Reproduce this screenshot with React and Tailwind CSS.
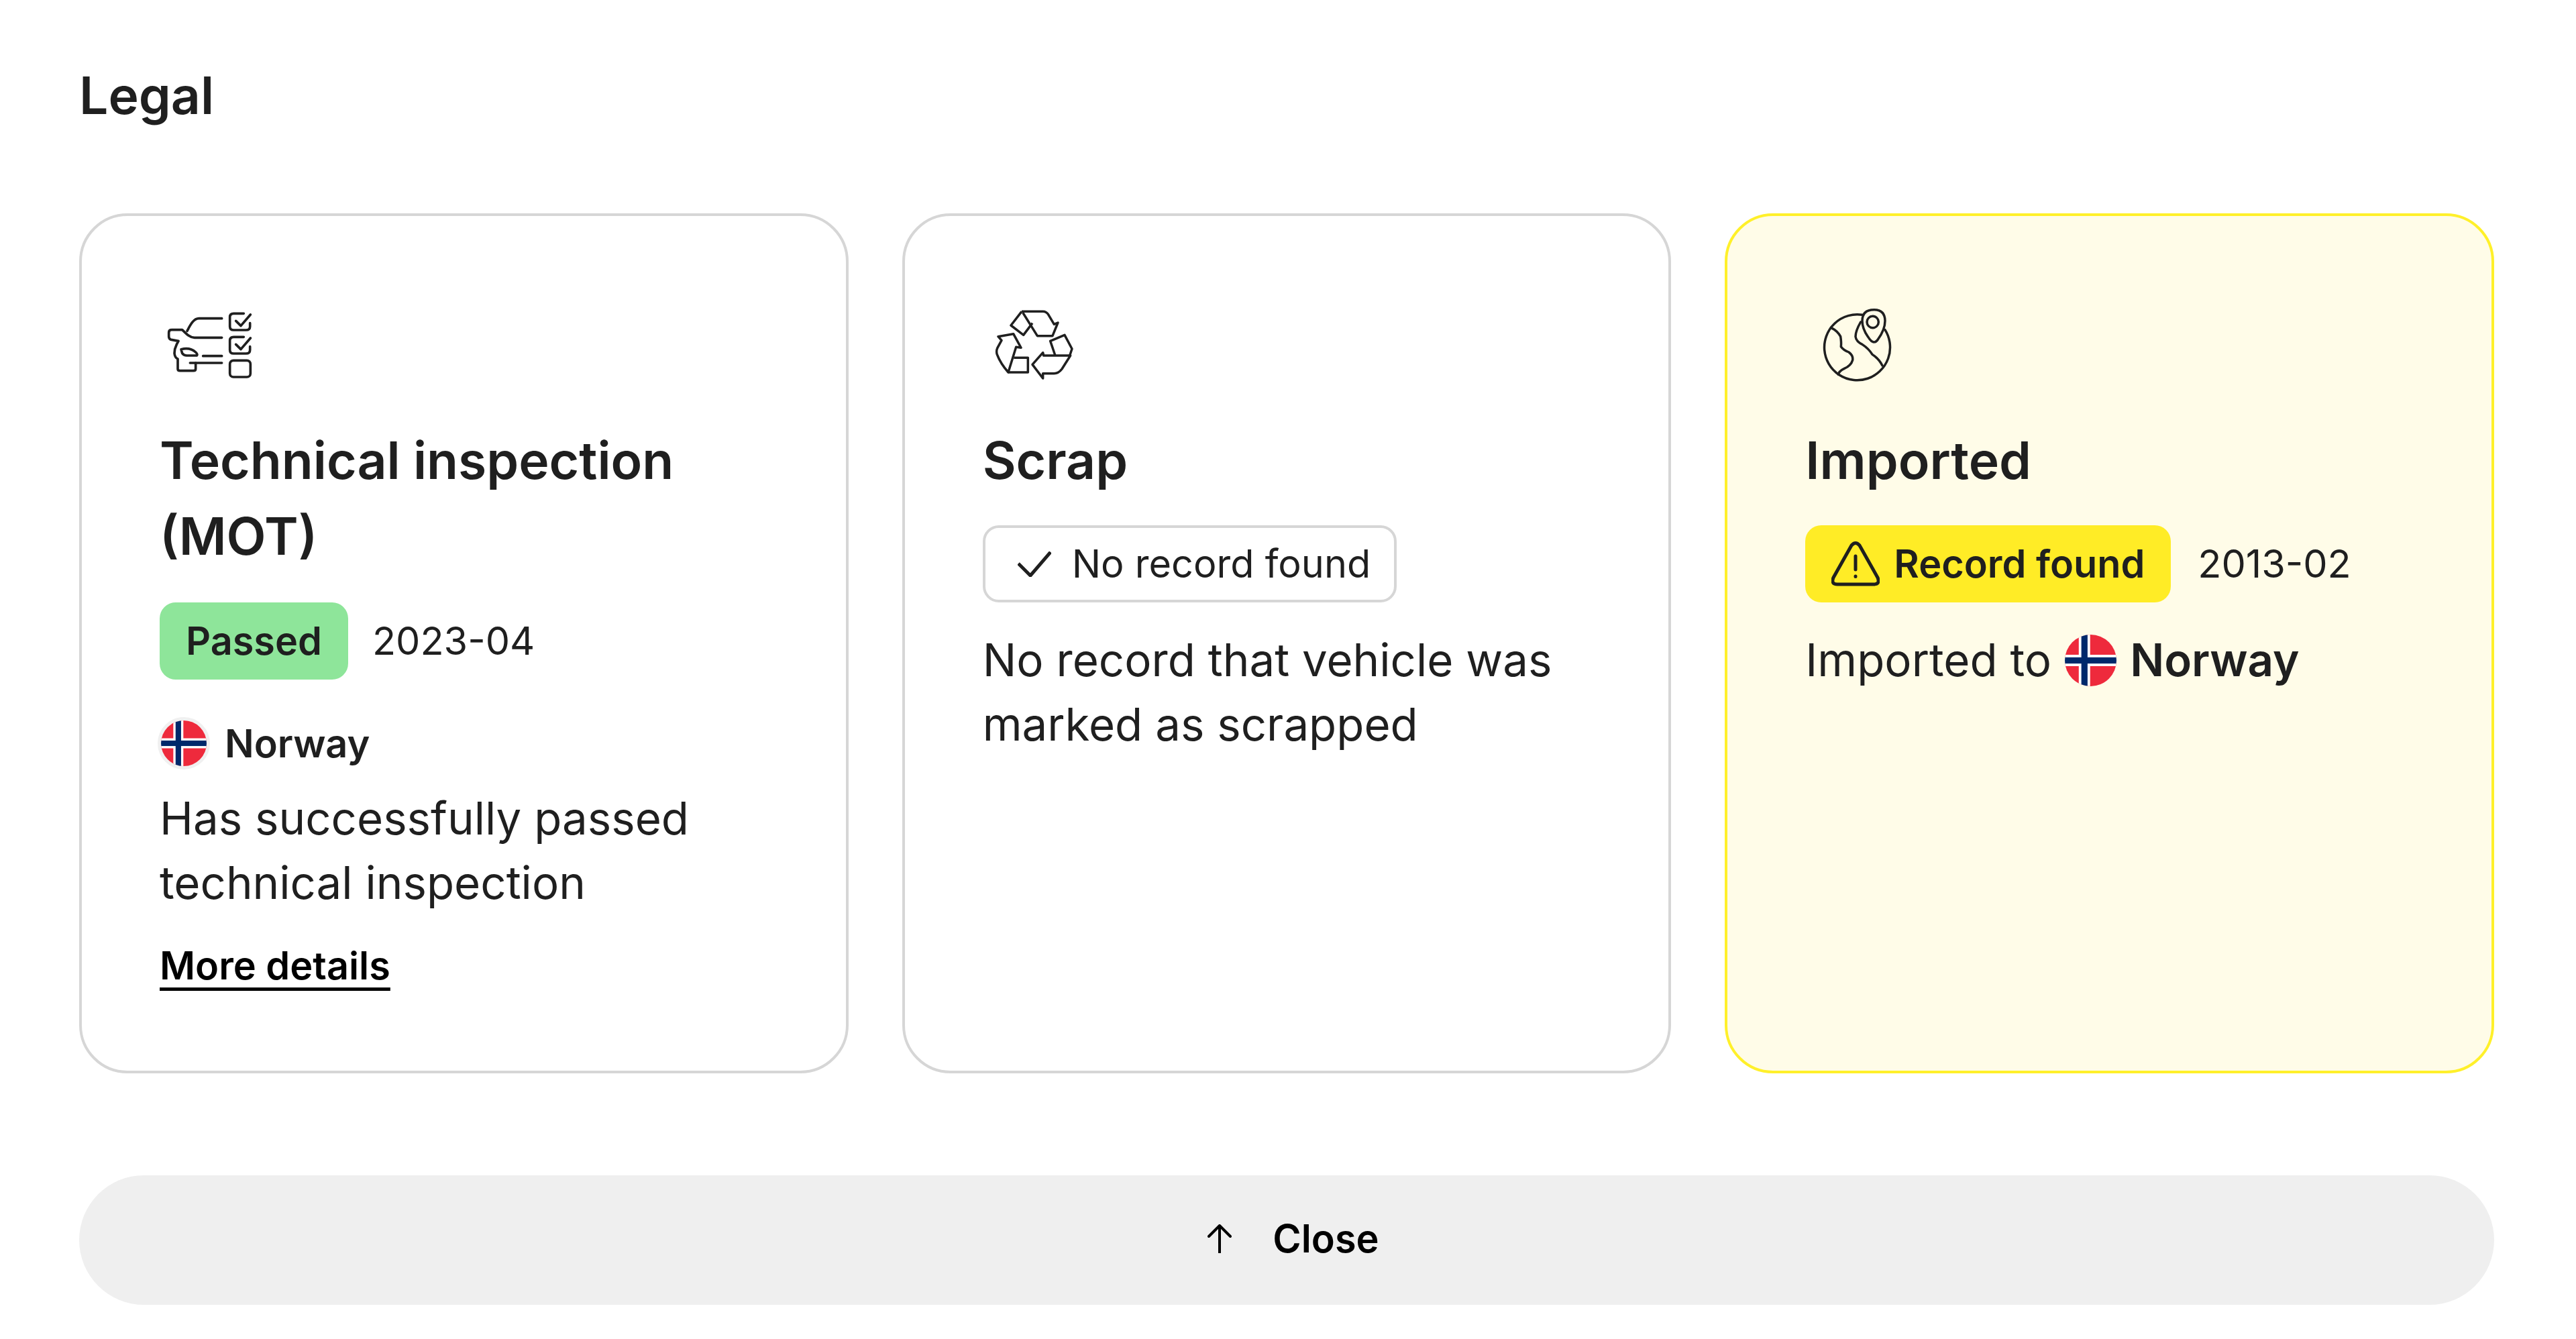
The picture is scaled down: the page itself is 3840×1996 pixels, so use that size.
import React from "react";

const ink = "#1f1f1f";

function Flag({ className }) {
  return (
    <svg viewBox="0 0 100 100" className={className}>
      <defs>
        <clipPath id="flag-circle">
          <circle cx="50" cy="50" r="50" />
        </clipPath>
      </defs>
      <g clipPath="url(#flag-circle)">
        <rect width="100" height="100" fill="#ee2a3c" />
        <rect x="27" width="22" height="100" fill="#fff" />
        <rect y="39" width="100" height="22" fill="#fff" />
        <rect x="32" width="12" height="100" fill="#00296b" />
        <rect y="44" width="100" height="12" fill="#00296b" />
      </g>
    </svg>
  );
}

function InspectionIcon() {
  return (
    <svg viewBox="114 36 432 432" className="w-[144px] h-[144px]" fill="none" stroke={ink} strokeWidth="11" strokeLinecap="round" strokeLinejoin="round">
      <path d="M392 134H290C265 134 250 165 237 190" />
      <path d="M392 220H270C250 220 235 205 215 185H168Q155 185 155 197V215Q155 228 170 230L198 235L190 250Q180 270 180 290Q182 310 195 315V360Q195 368 205 368H265Q275 368 275 360V333" />
      <path d="M250 333H392M308 302H392" />
      <path d="M210 272Q250 262 275 285Q285 295 280 300H235Q222 300 215 290Z" />
      <path d="M490 112H445Q428 112 428 128V170Q428 186 445 186H500Q518 186 518 170V155M455 145L477 167L520 117" />
      <path d="M490 217H445Q428 217 428 233V275Q428 291 445 291H500Q518 291 518 275V260M455 250L477 272L520 222" />
      <rect x="428" y="322" width="92" height="74" rx="16" />
    </svg>
  );
}

function RecycleIcon() {
  return (
    <svg viewBox="66 36 432 432" className="w-[144px] h-[144px]" fill="none" stroke={ink} strokeWidth="10.5" strokeLinejoin="round">
      <path d="M240 103L192 165L248 208L288 155" />
      <path d="M240 103H335Q350 103 360 118L385 160L402 153L378 212H310L245 108" />
      <path d="M390 300L368 235L432 208L465 270L455 300" />
      <path d="M458 300H338L335 287L288 340L335 402V380H385Q405 380 420 360Z" />
      <path d="M180 375H268V310H205" />
      <path d="M180 375Q145 335 130 295Q125 280 132 265L150 232L135 215L203 203L237 265L215 262Z" />
    </svg>
  );
}

function GlobeIcon() {
  return (
    <svg viewBox="90 36 432 432" className="w-[144px] h-[144px]" fill="none" stroke={ink} strokeWidth="10.5" strokeLinecap="round" strokeLinejoin="round">
      <path d="M345 118A147 147 0 1 0 447 185" />
      <path d="M398 240Q385 240 370 215Q345 180 345 145Q345 95 397 95Q447 95 447 145Q447 185 415 228Q408 240 398 240Z" />
      <circle cx="392" cy="150" r="26" />
      <path d="M205 175Q235 190 248 215Q252 240 250 260Q260 275 285 285Q305 300 302 320Q295 345 265 358Q240 370 238 385" />
      <path d="M338 150Q315 190 315 215Q318 238 345 250Q375 270 390 295Q420 315 435 345" />
    </svg>
  );
}

function Card({ className, children }) {
  return <div className={`rounded-[72px] border-4 px-[116px] pt-[120px] pb-[40px] ${className}`}>{children}</div>;
}

function Heading({ children }) {
  return <h3 className="mt-[44px] mb-[40px] text-[76.8px] leading-[113px] font-semibold">{children}</h3>;
}

export default function App() {
  return (
    <div className="min-h-[1996px] bg-white pl-[118px] pr-[122px] pt-[100px] text-[#1f1f1f] font-['Inter',sans-serif]">
      <h2 className="h-[86px] mb-[132px] text-[76.8px] leading-[86px] font-semibold">Legal</h2>

      <div className="grid grid-cols-3 gap-[80px] h-[1282px]">
        <Card className="border-[#d6d6d6] bg-white">
          <InspectionIcon />
          <Heading>Technical inspection (MOT)</Heading>
          <div className="mt-[42px] flex items-center gap-[36px]">
            <span className="flex h-[115px] w-[281px] items-center justify-center rounded-[24px] bg-[#8ee59a] text-[57.6px] font-semibold">Passed</span>
            <span className="text-[57.6px]">2023-04</span>
          </div>
          <div className="mt-[52px] -ml-[3px] flex items-center gap-[22px]">
            <span className="rounded-full border-[5px] border-[#f0f0f0] bg-white">
              <Flag className="w-[68px] h-[68px]" />
            </span>
            <span className="text-[57.6px] font-semibold">Norway</span>
          </div>
          <p className="mt-[21px] text-[67.2px] leading-[96px]">Has successfully passed technical inspection</p>
          <a href="#more" className="mt-[27px] block text-[57.6px] leading-[96px] font-semibold text-black underline underline-offset-[12px] decoration-[5px]">More details</a>
        </Card>

        <Card className="border-[#d6d6d6] bg-white">
          <RecycleIcon />
          <Heading>Scrap</Heading>
          <div className="flex h-[115px] w-[617px] items-center rounded-[24px] border-4 border-[#d6d6d6] pl-[48px]">
            <svg viewBox="0 0 50 38" className="w-[50px] h-[38px]" fill="none" stroke={ink} strokeWidth="5">
              <path d="M1 18L19 36L49 1" />
            </svg>
            <span className="ml-[31px] text-[57.6px]">No record found</span>
          </div>
          <p className="mt-[38px] text-[67.2px] leading-[96px]">No record that vehicle was marked as scrapped</p>
        </Card>

        <Card className="border-[#fff02a] bg-[#fffce8]">
          <GlobeIcon />
          <Heading>Imported</Heading>
          <div className="flex items-center gap-[40px]">
            <span className="flex h-[115px] w-[545px] items-center rounded-[24px] bg-[#ffec26] pl-[39px]">
              <svg viewBox="0 0 72 68" className="w-[72px] h-[68px]" fill="none" stroke={ink} strokeWidth="5" strokeLinecap="round" strokeLinejoin="round">
                <path d="M30 6Q36 -1 42 6L69 54Q73 64 63 64H9Q-1 64 3 54Z" />
                <path d="M36 22V42M36 52V52.5" />
              </svg>
              <span className="ml-[21px] text-[57.6px] font-semibold">Record found</span>
            </span>
            <span className="text-[57.6px]">2013-02</span>
          </div>
          <div className="mt-[38px] flex h-[96px] items-center text-[67.2px]">
            <span>Imported to</span>
            <Flag className="mx-[20px] w-[77px] h-[77px]" />
            <span className="font-semibold">Norway</span>
          </div>
        </Card>
      </div>

      <button className="mt-[152px] flex h-[193px] w-full items-center justify-center rounded-full bg-[#efefef] pb-[4px] pl-[20px] text-[57.6px] font-semibold text-black">
        <svg viewBox="0 0 36 43" className="w-[36px] h-[43px]" fill="none" stroke="#000" strokeWidth="4" strokeLinecap="round" strokeLinejoin="round">
          <path d="M18 42V2M2 18L18 2L34 18" />
        </svg>
        <span className="ml-[61px]">Close</span>
      </button>
    </div>
  );
}
